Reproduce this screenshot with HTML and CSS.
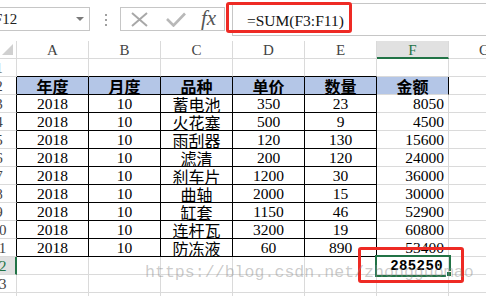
FILE: index.html
```html
<!DOCTYPE html>
<html lang="zh-CN">
<head>
    <meta charset="UTF-8">
    <title>SUM</title>
    <link rel="stylesheet" href="styles.css">
</head>
<body>
    <div class="formula-bar">
        <div class="name-box"><span class="name">F12</span><span class="drop"></span></div>
        <div class="sep"><i></i><i></i><i></i></div>
        <div class="fn-box">
            <svg class="ico-x" width="17" height="15" viewBox="0 0 17 15"><path d="M1 1L16 14M16 1L1 14" stroke="#a8a8a8" stroke-width="2" fill="none"/></svg>
            <svg class="ico-ok" width="20" height="15" viewBox="0 0 20 15"><path d="M1 7L7.5 13.5L19 1.5" stroke="#b8b8b8" stroke-width="2.6" fill="none"/></svg>
            <span class="fx">fx</span>
        </div>
        <div class="formula">=SUM(F3:F11)</div>
    </div>

    <div class="sheet">
        <!-- 列标 -->
        <div class="c corner"><svg width="16" height="17" viewBox="0 0 16 17"><path d="M13 3V14H2Z" fill="#d0d0d0"/></svg></div>
        <div class="c col">A</div>
        <div class="c col">B</div>
        <div class="c col">C</div>
        <div class="c col">D</div>
        <div class="c col">E</div>
        <div class="c col sel">F</div>
        <div class="c col">G</div>

        <div class="c rh"><span>1</span></div>
        <div class="c tt"></div><div class="c tt"></div><div class="c tt"></div><div class="c tt"></div><div class="c tt"></div>
        <div class="c"></div><div class="c"></div>

        <div class="c rh tl"><span>2</span></div>
        <div class="c tb th">年度</div>
        <div class="c tb th">月度</div>
        <div class="c tb th">品种</div>
        <div class="c tb th">单价</div>
        <div class="c tb th">数量</div>
        <div class="c th fr">金额</div>
        <div class="c"></div>

        <div class="c rh tl"><span>3</span></div>
        <div class="c tb">2018</div><div class="c tb">10</div><div class="c tb cn">蓄电池</div><div class="c tb">350</div><div class="c tb">23</div>
        <div class="c r">8050</div><div class="c"></div>

        <div class="c rh tl"><span>4</span></div>
        <div class="c tb">2018</div><div class="c tb">10</div><div class="c tb cn">火花塞</div><div class="c tb">500</div><div class="c tb">9</div>
        <div class="c r">4500</div><div class="c"></div>

        <div class="c rh tl"><span>5</span></div>
        <div class="c tb">2018</div><div class="c tb">10</div><div class="c tb cn">雨刮器</div><div class="c tb">120</div><div class="c tb">130</div>
        <div class="c r">15600</div><div class="c"></div>

        <div class="c rh tl"><span>6</span></div>
        <div class="c tb">2018</div><div class="c tb">10</div><div class="c tb cn">滤清</div><div class="c tb">200</div><div class="c tb">120</div>
        <div class="c r">24000</div><div class="c"></div>

        <div class="c rh tl"><span>7</span></div>
        <div class="c tb">2018</div><div class="c tb">10</div><div class="c tb cn">刹车片</div><div class="c tb">1200</div><div class="c tb">30</div>
        <div class="c r">36000</div><div class="c"></div>

        <div class="c rh tl"><span>8</span></div>
        <div class="c tb">2018</div><div class="c tb">10</div><div class="c tb cn">曲轴</div><div class="c tb">2000</div><div class="c tb">15</div>
        <div class="c r">30000</div><div class="c"></div>

        <div class="c rh tl"><span>9</span></div>
        <div class="c tb">2018</div><div class="c tb">10</div><div class="c tb cn">缸套</div><div class="c tb">1150</div><div class="c tb">46</div>
        <div class="c r">52900</div><div class="c"></div>

        <div class="c rh tl"><span>10</span></div>
        <div class="c tb">2018</div><div class="c tb">10</div><div class="c tb cn">连杆瓦</div><div class="c tb">3200</div><div class="c tb">19</div>
        <div class="c r">60800</div><div class="c"></div>

        <div class="c rh tl"><span>11</span></div>
        <div class="c tb">2018</div><div class="c tb">10</div><div class="c tb cn">防冻液</div><div class="c tb">60</div><div class="c tb">890</div>
        <div class="c r">53400</div><div class="c"></div>

        <div class="c rh sel"><span>12</span></div>
        <div class="c"></div><div class="c"></div><div class="c"></div><div class="c"></div><div class="c"></div>
        <div class="c r pick">285250</div><div class="c"></div>

        <div class="c rh"><span>13</span></div>
        <div class="c"></div><div class="c"></div><div class="c"></div><div class="c"></div><div class="c"></div><div class="c"></div><div class="c"></div>

        <div class="c rh"><span>14</span></div>
        <div class="c"></div><div class="c"></div><div class="c"></div><div class="c"></div><div class="c"></div><div class="c"></div><div class="c"></div>
    </div>

    <!-- 红框标注 -->
    <div class="mark mark-formula"></div>
    <div class="mark mark-cell"></div>

    <div class="watermark">https://blog.csdn.net/zhongguomao</div>
</body>
</html>
```

FILE: styles.css
```css
* {
    margin: 0;
    padding: 0;
}
html, body {
    width: 486px;
    height: 296px;
}
body {
    position: relative;
    overflow: hidden;
    background: #fff;
    font-family: "Liberation Serif", "Noto Sans CJK SC", serif;
}

/* 编辑栏 */
.formula-bar {
    display: flex;
    align-items: flex-start;
    height: 41px;
}
.name-box {
    box-sizing: border-box;
    width: 90px;
    height: 24px;
    margin-top: 7px;
    border: 1px solid #c6c6c6;
    border-left: 0;
    display: flex;
    align-items: center;
    justify-content: space-between;
    padding-right: 5px;
    overflow: hidden;
}
.name {
    margin-left: -6px;
    font-size: 15px;
    color: #222;
}
.drop {
    width: 0;
    height: 0;
    border-left: 4px solid transparent;
    border-right: 4px solid transparent;
    border-top: 4px solid #7a7a7a;
}
.sep {
    width: 30px;
    padding-left: 15px;
    padding-top: 14px;
    box-sizing: border-box;
    display: flex;
    flex-direction: column;
    gap: 3px;
}
.sep i {
    display: block;
    width: 2px;
    height: 2px;
    background: #a0a0a0;
}
.fn-box {
    box-sizing: border-box;
    width: 105px;
    height: 24px;
    margin-top: 7px;
    border: 1px solid #c6c6c6;
    display: flex;
    align-items: center;
}
.ico-x {
    margin-left: 10px;
}
.ico-ok {
    margin-left: 18px;
}
.fx {
    margin-left: 15px;
    font-style: italic;
    font-size: 21px;
    color: #555;
    line-height: 1;
    margin-top: -1px;
}
.formula {
    box-sizing: border-box;
    flex: 1;
    height: 33px;
    margin-top: 3px;
    margin-left: 7px;
    border: 1px solid #c6c6c6;
    border-right: 0;
    padding-left: 14px;
    padding-top: 2px;
    display: flex;
    align-items: center;
    font-size: 15.5px;
    color: #111;
}

/* 工作表 */
.sheet {
    display: grid;
    grid-template-columns: 17px repeat(7, 72px);
    grid-auto-rows: 18px;
}
.c {
    box-sizing: border-box;
    border-right: 1px solid #dadada;
    border-bottom: 1px solid #dadada;
    display: flex;
    align-items: center;
    justify-content: center;
    white-space: nowrap;
    font-size: 15.5px;
    color: #000;
    line-height: 18px;
}
.corner {
    align-items: flex-start;
    justify-content: flex-start;
}
.col {
    font-size: 15px;
    color: #444;
    padding-top: 1px;
}
.col.sel {
    background: #e1e1e1;
    border-bottom: 2px solid #217346;
    color: #217346;
}
.rh {
    justify-content: flex-start;
    overflow: hidden;
    font-size: 15px;
    color: #444;
}
.rh span {
    flex: none;
    width: 32px;
    margin-left: -17px;
    text-align: center;
}
.rh.tl {
    border-right-color: #000;
}
.rh.sel {
    background: #e1e1e1;
    border-right: 2px solid #217346;
    color: #217346;
}
.tt {
    border-bottom-color: #000;
}
.tb {
    border-right-color: #000;
    border-bottom-color: #000;
}
.th {
    background: #b4c6e7;
    font-family: "Noto Sans CJK SC", sans-serif;
    font-weight: bold;
    font-size: 16px;
}
.fr {
    border-right-color: #000;
}
.cn {
    font-family: "Noto Sans CJK SC", sans-serif;
    font-size: 16px;
}
.r {
    justify-content: flex-end;
    padding-right: 4px;
}
.pick {
    position: relative;
    z-index: 1;
    outline: 2px solid #217346;
    font-family: "Liberation Mono", monospace;
    font-size: 14px;
    font-weight: bold;
    letter-spacing: 0.4px;
    padding-right: 5px;
}
.pick::after {
    content: "";
    position: absolute;
    right: -4px;
    bottom: -3px;
    width: 4px;
    height: 4px;
    background: #217346;
    border: 1px solid #fff;
}

/* 红框 */
.mark {
    position: absolute;
    border: 3px solid #ee2a24;
    border-radius: 3px;
    box-sizing: border-box;
    z-index: 2;
}
.mark-formula {
    left: 226px;
    top: 2px;
    width: 126px;
    height: 31px;
}
.mark-cell {
    left: 358px;
    top: 247px;
    width: 106px;
    height: 36px;
}

.watermark {
    position: absolute;
    left: 145px;
    top: 265px;
    z-index: 3;
    font-family: "Liberation Mono", monospace;
    font-size: 16.6px;
    line-height: 1;
    color: rgba(140, 140, 140, 0.45);
    white-space: nowrap;
}
```
